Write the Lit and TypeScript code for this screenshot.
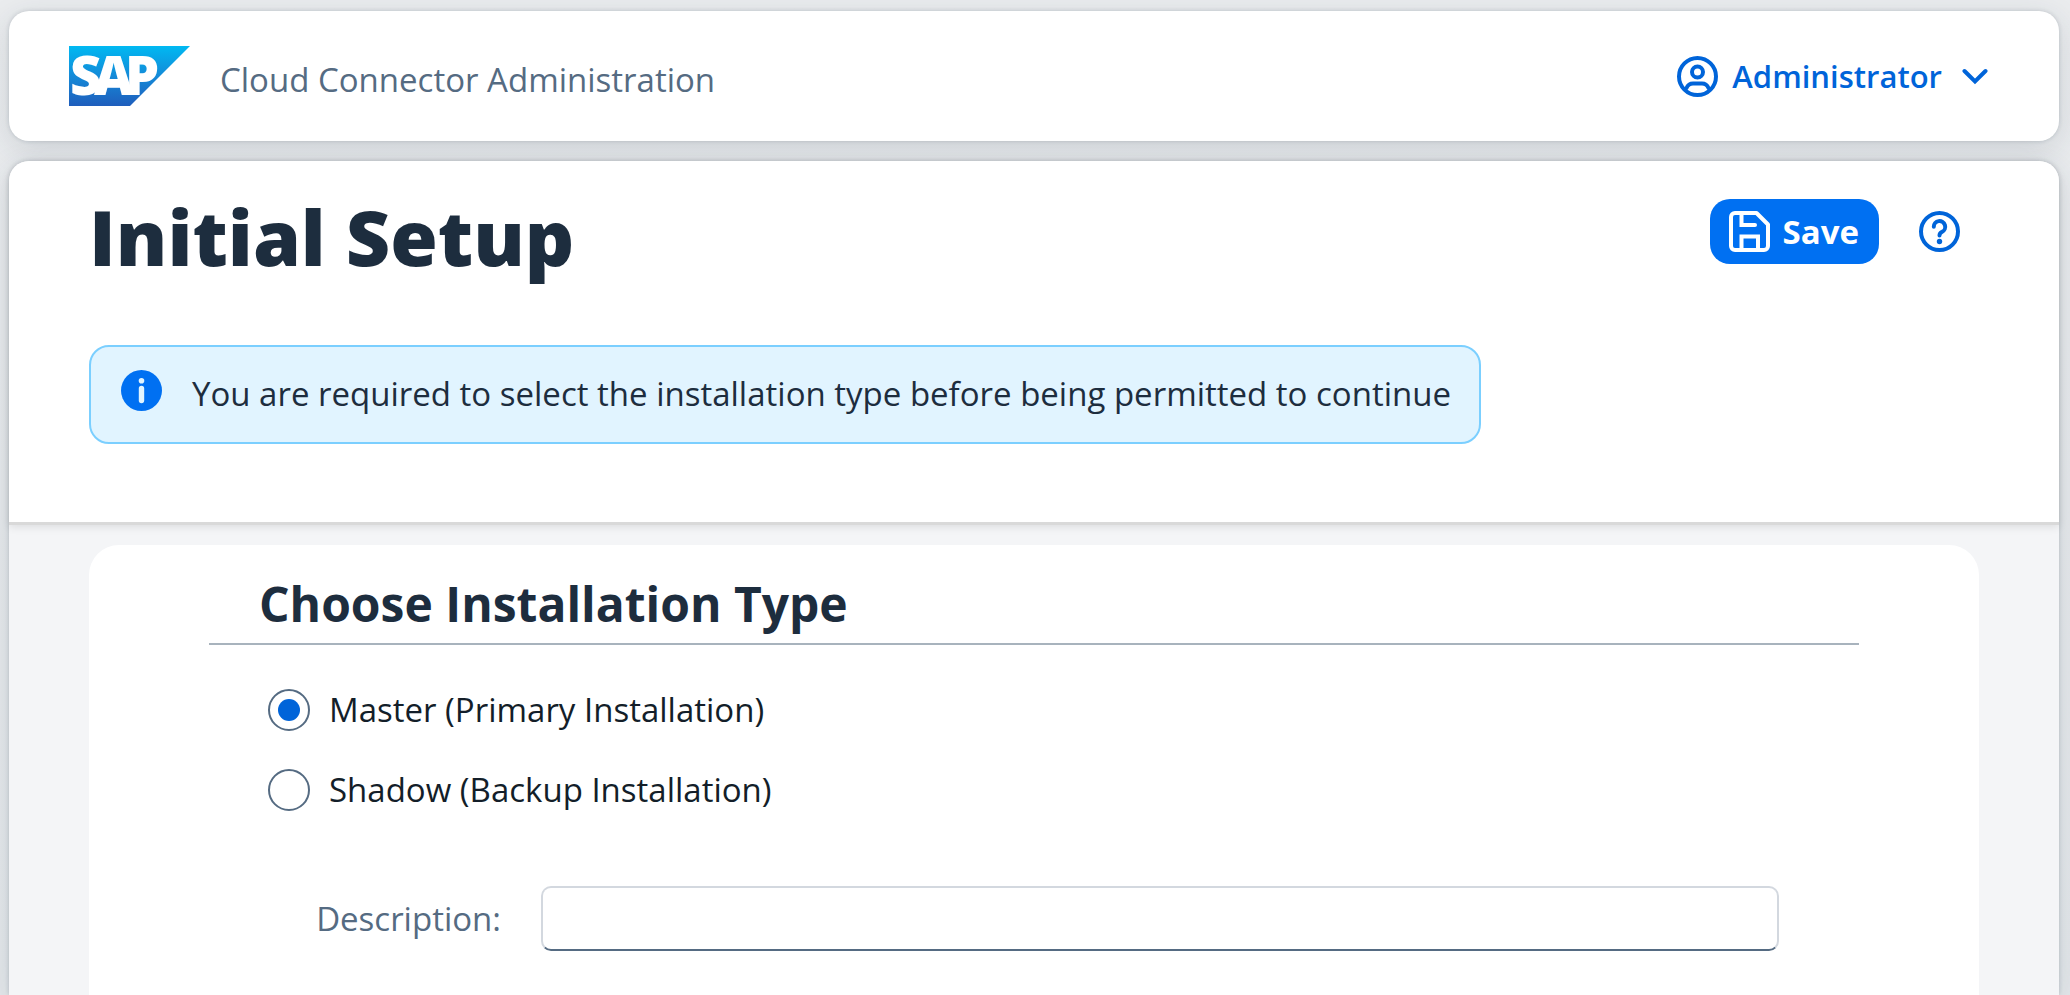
import { LitElement, html, css, svg } from "lit";
import { customElement, state } from "lit/decorators.js";

type InstallationType = "master" | "shadow";

const OPTIONS: { value: InstallationType; label: string }[] = [
  { value: "master", label: "Master (Primary Installation)" },
  { value: "shadow", label: "Shadow (Backup Installation)" },
];

const userIcon = svg`<svg class="icon" viewBox="0 0 41 41" aria-hidden="true">
  <g fill="none" stroke="currentColor" stroke-width="4" stroke-linecap="round">
    <circle cx="20.5" cy="20.5" r="18.5" />
    <circle cx="20.5" cy="16" r="5.5" />
    <path d="M9.5 32C11 28.5 13.5 27.5 16 27.5H25C27.5 27.5 30 28.5 31.5 32" />
  </g>
</svg>`;

const chevronIcon = svg`<svg class="chevron" viewBox="0 0 26 18" aria-hidden="true">
  <path d="M2.5 4L13 14.5L23.5 4" fill="none" stroke="currentColor" stroke-width="4" stroke-linecap="round" />
</svg>`;

const saveIcon = svg`<svg class="icon" viewBox="0 0 41 41" aria-hidden="true">
  <g fill="none" stroke="currentColor" stroke-width="4">
    <path d="M6 2H27.5L39 13.5V35A4 4 0 0 1 35 39H6A4 4 0 0 1 2 35V6A4 4 0 0 1 6 2Z" stroke-linejoin="round" />
    <path d="M12.5 3V14H26" stroke-linecap="round" />
    <path d="M12.5 39V25.5H29V39" />
  </g>
</svg>`;

const helpIcon = svg`<svg class="icon" viewBox="0 0 41 41" aria-hidden="true">
  <g fill="none" stroke="currentColor" stroke-width="4" stroke-linecap="round">
    <circle cx="20.5" cy="20.5" r="18.5" />
    <path d="M14.8 15.8A5.7 5.7 0 1 1 23 20.9Q20.5 22 20.5 24.5" />
  </g>
  <circle cx="20.5" cy="30.5" r="2.7" fill="currentColor" />
</svg>`;

const infoIcon = svg`<svg class="icon" viewBox="0 0 41 41" aria-hidden="true">
  <circle cx="20.5" cy="20.5" r="20.5" fill="#0070f2" />
  <circle cx="20.5" cy="10.7" r="2.8" fill="#e1f4ff" />
  <rect x="17.8" y="15.8" width="5.4" height="17.4" rx="2.7" fill="#e1f4ff" />
</svg>`;

const logo = svg`<svg class="logo" viewBox="0 0 121 60" role="img" aria-label="SAP">
  <defs>
    <linearGradient id="sky" x1="0" y1="0" x2="0" y2="1">
      <stop offset="0" stop-color="#00b9f2" />
      <stop offset="0.5" stop-color="#148ad8" />
      <stop offset="1" stop-color="#1f5dbc" />
    </linearGradient>
  </defs>
  <path d="M0 0H121L61 60H0Z" fill="url(#sky)" />
  <text class="mark" x="1 25 56" y="49">SAP</text>
</svg>`;

@customElement("app-root")
export class AppRoot extends LitElement {
  @state() private installation: InstallationType = "master";
  @state() private description = "";

  static styles = css`
    :host {
      display: flex;
      flex-direction: column;
      gap: 20px;
      box-sizing: border-box;
      height: 100vh;
      padding: 11px 11px 0 9px;
      overflow: hidden;
      background: linear-gradient(#eaecee, #e4e8eb);
      color: #1d2d3e;
      font-family: "Open Sans", "Noto Sans", sans-serif;
      font-size: 33px;
      line-height: 46px;
    }
    *,
    *::before {
      box-sizing: border-box;
    }
    h1,
    h2,
    p {
      margin: 0;
    }
    button {
      display: flex;
      align-items: center;
      margin: 0;
      padding: 0;
      border: 0;
      background: none;
      color: #0064d9;
      font: inherit;
      cursor: pointer;
    }
    .icon {
      display: block;
      flex: none;
      width: 41px;
      height: 41px;
    }
    .shell,
    .page {
      background: #fff;
      box-shadow: 0 0 4px rgba(34, 53, 72, 0.2), 0 8px 32px rgba(34, 53, 72, 0.14);
    }
    .shell {
      display: flex;
      align-items: center;
      flex: none;
      padding: 35px 71px 35px 60px;
      border-radius: 20px;
    }
    .logo {
      display: block;
      width: 121px;
      height: 60px;
      overflow: visible;
    }
    .mark {
      fill: #fff;
      font-size: 54px;
      font-weight: 800;
    }
    .product {
      flex: 1;
      padding: 8px 0 0 30px;
      color: #556b82;
    }
    .user {
      gap: 14px;
      font-size: 31px;
      font-weight: 600;
    }
    .chevron {
      width: 26px;
      height: 18px;
      margin-left: 6px;
    }
    .page {
      flex: 1;
      border-radius: 20px 20px 0 0;
      background: #f4f5f7;
    }
    .heading {
      padding: 30px 80px 78px;
      border-bottom: 3px solid #d9d9d9;
      border-radius: 20px 20px 0 0;
      background: #fff;
      box-shadow: 0 2px 8px rgba(0, 0, 0, 0.1);
    }
    .title-row {
      display: flex;
      align-items: flex-start;
      justify-content: space-between;
      margin-bottom: 62px;
    }
    h1 {
      font-size: 77px;
      font-weight: 800;
      line-height: 92px;
    }
    .actions {
      display: flex;
      align-items: center;
      gap: 40px;
      padding: 8px 19px 0 0;
    }
    .save {
      gap: 13px;
      height: 65px;
      padding: 0 20px 0 19px;
      border-radius: 20px;
      background: #0070f2;
      color: #fff;
      font-weight: 700;
    }
    .strip {
      display: flex;
      gap: 30px;
      width: fit-content;
      padding: 23px 28px 24px 30px;
      border: 2px solid #7bcfff;
      border-radius: 20px;
      background: #e1f4ff;
    }
    .strip p {
      line-height: 48px;
    }
    .panel {
      min-height: 100%;
      margin: 20px 80px 0;
      padding: 26px 120px;
      border-radius: 30px;
      background: #fff;
    }
    h2 {
      padding: 0 50px 6px;
      border-bottom: 2px solid #a8b3bd;
      font-size: 48px;
      font-weight: 700;
      line-height: 66px;
    }
    fieldset {
      min-width: 0;
      margin: 25px 0 56px;
      padding: 0 59px;
      border: 0;
    }
    .option {
      display: flex;
      align-items: center;
      gap: 19px;
      width: fit-content;
      height: 80px;
      color: #131e29;
    }
    .option input {
      display: grid;
      place-content: center;
      width: 42px;
      height: 42px;
      margin: 0;
      border: 2px solid #556b82;
      border-radius: 50%;
      background: #fff;
      appearance: none;
    }
    .option input:checked::before {
      content: "";
      width: 22px;
      height: 22px;
      border-radius: 50%;
      background: #0064d9;
    }
    .field {
      display: grid;
      grid-template-columns: 292px 1fr;
      align-items: center;
      gap: 40px;
      padding-right: 80px;
    }
    .field label {
      color: #556b82;
      text-align: right;
    }
    .field input {
      width: 100%;
      height: 65px;
      padding: 0 18px;
      border: 2px solid #d3d8df;
      border-bottom-color: #556b82;
      border-radius: 10px;
      outline: 0;
      background: #fff;
      color: #131e29;
      font: inherit;
    }
  `;

  render() {
    return html`
      <header class="shell">
        ${logo}
        <span class="product">Cloud Connector Administration</span>
        <button class="user" type="button" aria-haspopup="menu">
          ${userIcon}<span>Administrator</span>${chevronIcon}
        </button>
      </header>
      <main class="page">
        <div class="heading">
          <div class="title-row">
            <h1>Initial Setup</h1>
            <div class="actions">
              <button class="save" type="submit" form="setup">${saveIcon}<span>Save</span></button>
              <button type="button" aria-label="Help">${helpIcon}</button>
            </div>
          </div>
          <div class="strip" role="status">
            ${infoIcon}
            <p>You are required to select the installation type before being permitted to continue</p>
          </div>
        </div>
        <form class="panel" id="setup" @submit=${(e: Event) => e.preventDefault()}>
          <h2 id="type">Choose Installation Type</h2>
          <fieldset aria-labelledby="type">
            ${OPTIONS.map(
              (o) => html`<label class="option">
                <input
                  type="radio"
                  name="installation"
                  value=${o.value}
                  .checked=${this.installation === o.value}
                  @change=${() => (this.installation = o.value)}
                />
                <span>${o.label}</span>
              </label>`
            )}
          </fieldset>
          <div class="field">
            <label for="description">Description:</label>
            <input
              id="description"
              type="text"
              .value=${this.description}
              @input=${(e: Event) => (this.description = (e.target as HTMLInputElement).value)}
            />
          </div>
        </form>
      </main>
    `;
  }
}
